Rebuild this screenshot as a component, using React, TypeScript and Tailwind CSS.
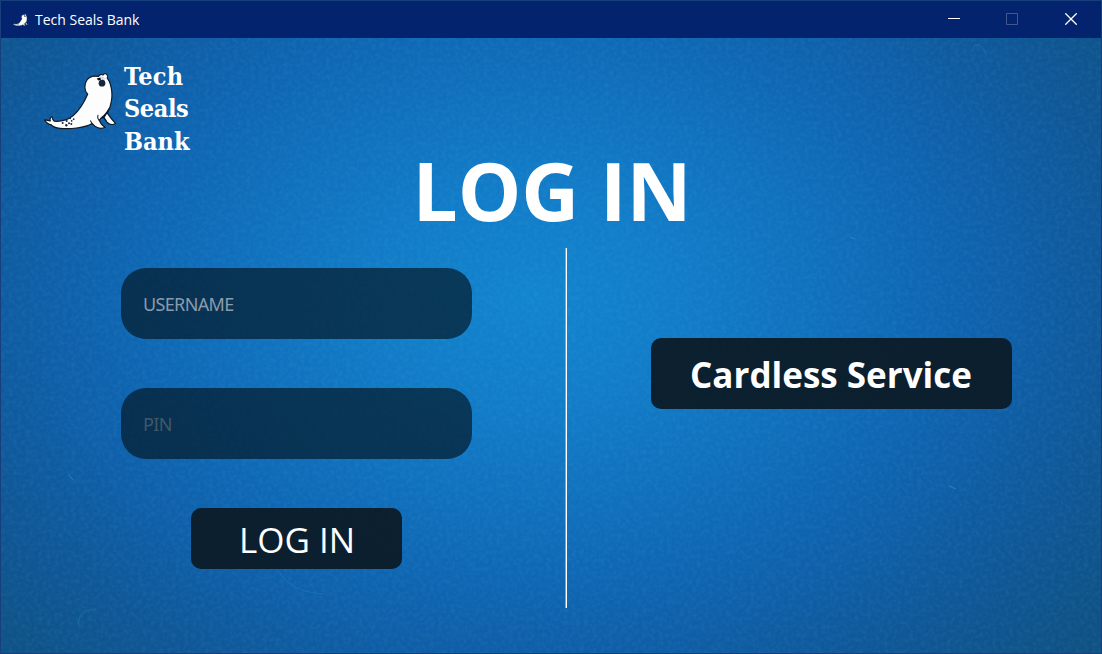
function Seal({ className }: { className: string }) {
  return (
    <svg className={className} viewBox="21 36 222 172" fill="none" preserveAspectRatio="none">
      <path
        d="M25 178 C32 178 38 180 43 181 C41 175 43 170 48 168 C49 175 51 179 55 182 C78 184 97 177 111 166 C132 148 145 125 155 102 C146 93 145 80 149 67 C155 52 170 46 188 49 C190 43 197 42 201 45 C205 38 214 41 214 48 L214 55 C225 68 231 98 226 123 C224 138 219 149 214 158 C222 170 230 180 239 189 C230 194 219 191 213 185 C209 180 205 174 202 169 C196 171 192 175 190 179 C194 190 200 196 208 200 C196 205 184 202 177 197 C173 194 171 190 168 189 C148 202 100 206 72 203 C60 202 49 197 45 192 C37 192 30 185 25 178 Z"
        fill="#fdfdfe"
        stroke="#101923"
        strokeWidth="3.5"
        strokeLinejoin="round"
      />
      <path d="M221 139 C217 153 212 163 204 173 C201 174 197 172 195 170 C203 165 211 156 215 148 Z" fill="#091522" />
      <path d="M186 163 C184 171 186 177 191 181 M163 180 L170 192 M204 171 L211 181" stroke="#101923" strokeWidth="3" />
      <path d="M190 49 C196 52 200 60 197 64 L205 58 C209 55 210 50 214 49" fill="#d7d9de" />
      <circle cx="198" cy="69" r="10" fill="#16263e" />
      <path d="M182 55 L193 52 L195 59 L187 61 Z" fill="#05090f" />
      <circle cx="207" cy="49" r="5" fill="#ffffff" />
      <g fill="#16263e">
        <circle cx="80" cy="187" r="3" />
        <circle cx="92" cy="181" r="3" />
        <circle cx="91" cy="194" r="3.5" />
        <circle cx="99" cy="188" r="3" />
        <circle cx="103" cy="174" r="2" />
        <circle cx="107" cy="181" r="2.5" />
        <circle cx="106" cy="190" r="3" />
        <circle cx="113" cy="176" r="2.5" />
      </g>
    </svg>
  );
}

function Texture() {
  return (
    <svg className="pointer-events-none absolute inset-0 h-full w-full" aria-hidden="true">
      <filter id="grain" x="0" y="0" width="100%" height="100%">
        <feTurbulence type="fractalNoise" baseFrequency="0.24" numOctaves="3" seed="8" />
        <feColorMatrix values="0 0 0 0 0.12  0 0 0 0 0.65  0 0 0 0 0.88  0.7 0 0 0 -0.25" />
      </filter>
      <rect width="100%" height="100%" filter="url(#grain)" opacity="0.25" />
      <g fill="none" stroke="#2aa1dc" strokeOpacity="0.25" strokeWidth="1.2">
        <path d="M279 535 C288 549 303 555 323 556" />
        <path d="M971 14 C974 2 980 6 985 16" />
        <path d="M78 589 C76 577 82 572 95 571" />
        <path d="M68 437 L72 442 M948 448 L955 451 M849 199 L854 201" strokeOpacity="0.5" />
      </g>
    </svg>
  );
}

function TitleBar() {
  return (
    <header className="flex h-[37px] shrink-0 items-center bg-[#04236e] text-white">
      <Seal className="ml-3 h-3 w-[15px]" />
      <span className="ml-[7px] whitespace-nowrap font-['Open_Sans',sans-serif] text-sm leading-5">
        Tech Seals Bank
      </span>
      <div className="ml-auto flex h-full">
        <button className="flex w-[58px] items-center justify-center" aria-label="Minimize">
          <svg className="h-3 w-3" viewBox="0 0 12 12"><path d="M0 4.5H12" stroke="#fff" /></svg>
        </button>
        <button className="flex w-[58px] items-center justify-center" aria-label="Maximize">
          <svg className="mb-px h-3 w-3" viewBox="0 0 12 12"><path d="M.5 .5H11.5V11.5H.5Z" fill="none" stroke="#405792" /></svg>
        </button>
        <button className="flex w-[60px] items-center justify-center" aria-label="Close">
          <svg className="mb-px h-3 w-3" viewBox="0 0 12 12"><path d="M.3 .3L11.7 11.7M11.7 .3L.3 11.7" stroke="#fff" strokeWidth="1.3" /></svg>
        </button>
      </div>
    </header>
  );
}

const field =
  "h-[71px] w-[351px] rounded-[25px] bg-[#041a28]/70 px-[22px] pt-px font-['Noto_Sans',sans-serif] text-[18px] tracking-[-0.65px] outline-none";

export default function App() {
  return (
    <div className="flex h-[654px] w-[1102px] flex-col overflow-hidden border border-[#173f7c] bg-[#0f5da4]">
      <TitleBar />
      <main className="relative flex-1 bg-[radial-gradient(ellipse_680px_490px_at_530px_260px,#1284ce_0%,#127bc7_24%,#106bb8_50%,#0f60ab_68%,#0f5798_86%,#0f4f7c_115%)] font-['Open_Sans',sans-serif] text-white">
        <Texture />
        <div className="relative flex h-full flex-col">
          <div className="flex h-[116px] pl-[42px] pt-[22px]">
            <Seal className="mt-3 h-[58px] w-[74px]" />
            <div className="ml-[7px] pt-px font-['DejaVu_Serif_Condensed','DejaVu_Serif',serif] text-[25px] font-bold [font-stretch:condensed]">
              <div className="leading-8 tracking-[0.3px]">Tech</div>
              <div className="leading-8 tracking-[-0.4px]">Seals</div>
              <div className="leading-[34px]">Bank</div>
            </div>
          </div>
          <h1 className="h-[94px] pl-0.5 text-center text-[80px] font-bold leading-[71px]">LOG IN</h1>
          <div className="flex flex-1">
            <form className="flex w-[564px] flex-col items-center pl-[27px] pt-5">
              <input className={`${field} placeholder:text-[#8a9bad]`} placeholder="USERNAME" />
              <input className={`${field} mt-[49px] placeholder:text-[#405868]`} placeholder="PIN" type="password" />
              <button type="button" className="mt-[49px] h-[61px] w-[211px] rounded-[10px] bg-[#0c1b27]/95 pl-px pt-1 text-[35px]">
                LOG IN
              </button>
            </form>
            <div className="flex h-[360px] w-[2px]">
              <div className="w-px bg-[#9f9fa0]" />
              <div className="w-px bg-white" />
            </div>
            <section className="pl-[84px] pt-[90px]">
              <button type="button" className="h-[71px] w-[361px] rounded-[10px] bg-[#0c1b27]/95 pr-px pt-1 text-[35px] font-bold">
                Cardless Service
              </button>
            </section>
          </div>
        </div>
      </main>
    </div>
  );
}
